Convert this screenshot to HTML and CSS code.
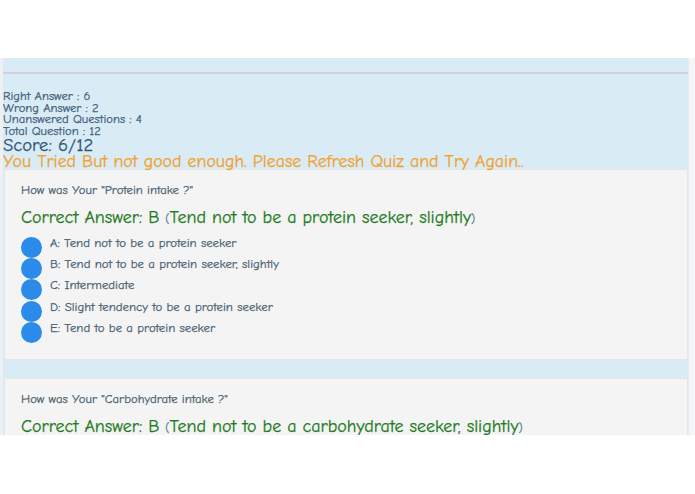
FILE: index.html
```html
<!DOCTYPE html>
<html>
<head>
<meta charset="utf-8">
<link rel="stylesheet" href="styles.css">
</head>
<body>
<div class="page">
  <div class="result">
    <div class="rule"></div>
    <div class="stats">
      <div>Right Answer : 6</div>
      <div>Wrong Answer : 2</div>
      <div>Unanswered Questions : 4</div>
      <div>Total Question : 12</div>
    </div>
    <div class="score">Score: 6/12</div>
    <div class="message">You Tried But not good enough. Please Refresh Quiz and Try Again..</div>
    <div class="card">
      <div class="question">How was Your "Protein intake ?"</div>
      <div class="correct">Correct Answer: B <span class="paren">(</span>Tend not to be a protein seeker, slightly<span class="paren">)</span></div>
      <ul class="options">
        <li><span class="dot"></span>A: Tend not to be a protein seeker</li>
        <li><span class="dot"></span>B: Tend not to be a protein seeker, slightly</li>
        <li><span class="dot"></span>C: Intermediate</li>
        <li><span class="dot"></span>D: Slight tendency to be a protein seeker</li>
        <li><span class="dot"></span>E: Tend to be a protein seeker</li>
      </ul>
    </div>
    <div class="card">
      <div class="question">How was Your "Carbohydrate intake ?"</div>
      <div class="correct">Correct Answer: B <span class="paren">(</span>Tend not to be a carbohydrate seeker, slightly<span class="paren">)</span></div>
      <ul class="options">
        <li><span class="dot"></span>A: Tend not to be a carbohydrate seeker</li>
      </ul>
    </div>
  </div>
  <div class="gutter"></div>
</div>
</body>
</html>
```
FILE: styles.css
```css
html, body {
  margin: 0;
  padding: 0;
  background: #ffffff;
}
body {
  font-family: "Comic Sans MS", "Comic Neue", "Noto Sans", sans-serif;
  -webkit-text-stroke: 0.25px currentColor;
}
.page {
  margin-top: 58px;
  height: 377px;
  overflow: hidden;
  display: flex;
  border-left: 3px solid #eef0f2;
}
.result {
  flex: 0 0 685px;
  background: #d9ebf5;
}
.gutter {
  flex: 1;
  background: #f4f5f6;
  border-left: 1px solid #e8eaec;
}
.rule {
  margin-top: 14px;
  height: 2px;
  background: #d6cde2;
}
.stats {
  margin-top: 17px;
  font-size: 12.6px;
  line-height: 11.5px;
  color: #3f5f7a;
}
.score {
  font-size: 18.6px;
  line-height: 17px;
  color: #2e5479;
}
.message {
  font-size: 17.9px;
  line-height: 15px;
  color: #f2a12b;
}
.card {
  background: #f4f4f4;
  border: 1px solid #e4e6e8;
  margin: 0 0 18px 1px;
  padding: 13px 16px 18px;
}
.question {
  font-size: 12.7px;
  line-height: 14px;
  color: #4d6170;
}
.correct {
  margin-top: 11px;
  font-size: 18px;
  line-height: 20px;
  color: #1e7a1e;
}
.paren {
  font-size: 12px;
  color: #5a7a8a;
}
.options {
  list-style: none;
  margin: 6px 0 0;
  padding: 0;
}
.options li {
  display: flex;
  align-items: flex-start;
  height: 21.2px;
  font-size: 12.8px;
  line-height: 16px;
  color: #4a6272;
}
.dot {
  width: 21px;
  height: 21px;
  border-radius: 50%;
  background: #2b8be9;
  margin: 2px 8px 0 0;
  flex: none;
  -webkit-text-stroke: 0;
}
```
